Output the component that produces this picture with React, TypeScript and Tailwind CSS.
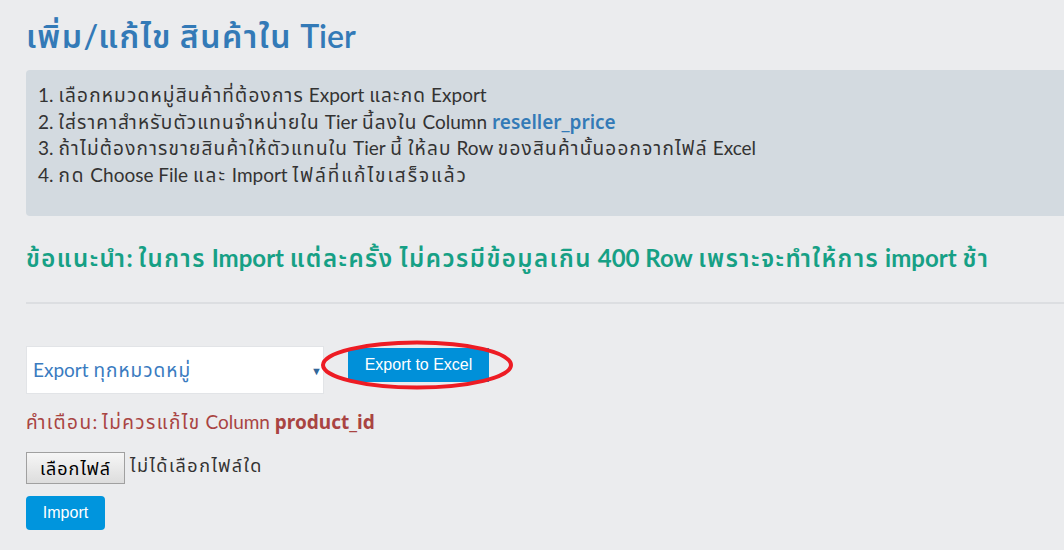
import { Fragment } from "react";

// wraps Thai runs so they can get a bit more tracking than the latin words
const Th = ({ text, className }: { text: string; className: string }) => (
  <>
    {text.split(/([\u0E00-\u0E7F]+)/).map((part, i) =>
      /[\u0E00-\u0E7F]/.test(part) ? (
        <span key={i} className={className}>
          {part}
        </span>
      ) : (
        <Fragment key={i}>{part}</Fragment>
      )
    )}
  </>
);

const steps = [
  "1. เลือกหมวดหมู่สินค้าที่ต้องการ Export และกด Export",
  "2. ใส่ราคาสำหรับตัวแทนจำหน่ายใน Tier นี้ลงใน Column ",
  "3. ถ้าไม่ต้องการขายสินค้าให้ตัวแทนใน Tier นี้ ให้ลบ Row ของสินค้านั้นออกจากไฟล์ Excel",
  "4. กด Choose File และ Import ไฟล์ที่แก้ไขเสร็จแล้ว",
];

export default function App() {
  return (
    <div
      className="min-h-[550px] w-[1064px] overflow-hidden bg-[#ebecee] pl-[26px] text-[#333]"
      style={{ fontFamily: 'Lato, "Noto Sans Thai", "Noto Sans", sans-serif' }}
    >
      <h1 className="pt-[14px] text-[32px] font-semibold leading-[44px] text-[#337ab7]">
        <Th text="เพิ่ม/แก้ไข สินค้าใน Tier" className="tracking-[1.5px]" />
      </h1>
      <div className="mt-[12px] h-[146px] w-[1100px] rounded-[4px] bg-[#d3dae0] px-[12px] pt-[12px] text-[19px] leading-[26.6px]">
        {steps.map((s, i) => (
          <div key={i}>
            <Th text={s} className={i === 3 ? "tracking-[2px]" : "tracking-[1.2px]"} />
            {i === 1 && (
              <span className="font-semibold text-[#337ab7]" style={{ fontFamily: '"Noto Sans", sans-serif' }}>
                reseller_price
              </span>
            )}
          </div>
        ))}
      </div>
      <h3 className="mt-[24px] text-[24px] font-bold leading-[36px] text-[#16a085]">
        <Th
          text="ข้อแนะนำ: ในการ Import แต่ละครั้ง ไม่ควรมีข้อมูลเกิน 400 Row เพราะจะทำให้การ import ช้า"
          className="font-semibold tracking-[1.5px]"
        />
      </h3>
      <hr className="mt-[26px] border-t-2 border-[#dcdee1]" />
      <div className="mt-[42px] flex items-center">
        <div className="relative flex h-[48px] w-[298px] items-center border border-[#e2e4e7] bg-white pl-[6px] text-[19px] text-[#3a7bbf]">
          <span>
            <Th text="Export ทุกหมวดหมู่" className="tracking-[1px]" />
          </span>
          <span className="absolute right-[1px] top-[16px] text-[11px] text-[#336699]">▼</span>
        </div>
        <div className="relative ml-[24px] mt-[-11px]">
          <button
            className="h-[34px] w-[141px] bg-[#0090d9] text-[16px] text-white"
            style={{ fontFamily: '"Liberation Sans", Arial, sans-serif' }}
          >
            Export to Excel
          </button>
          <svg
            className="pointer-events-none absolute left-[-28px] top-[-8px]"
            width="194"
            height="50"
            viewBox="0 0 194 50"
          >
            <ellipse cx="97" cy="25" rx="94" ry="22.5" fill="none" stroke="#ed1c24" strokeWidth="4" />
          </svg>
        </div>
      </div>
      <div className="mt-[14px] text-[19px] leading-[28px] text-[#a94442]">
        <Th text="คำเตือน: ไม่ควรแก้ไข Column " className="tracking-[1.4px]" />
        <span className="font-bold" style={{ fontFamily: '"Noto Sans", sans-serif' }}>
          product_id
        </span>
      </div>
      <div className="mt-[16px] flex items-start">
        <button className="h-[32px] w-[99px] border border-[#a0a0a0] bg-gradient-to-b from-[#f6f6f6] to-[#dddddd] text-[18px] tracking-[1px] text-black">
          เลือกไฟล์
        </button>
        <span className="ml-[5px] text-[18px] leading-[26px] tracking-[1.5px] text-[#333]">
          ไม่ได้เลือกไฟล์ใด
        </span>
      </div>
      <button
        className="mt-[12px] h-[34px] w-[79px] rounded-[4px] bg-[#0095dd] text-[16px] text-white"
        style={{ fontFamily: '"Liberation Sans", Arial, sans-serif' }}
      >
        Import
      </button>
    </div>
  );
}
